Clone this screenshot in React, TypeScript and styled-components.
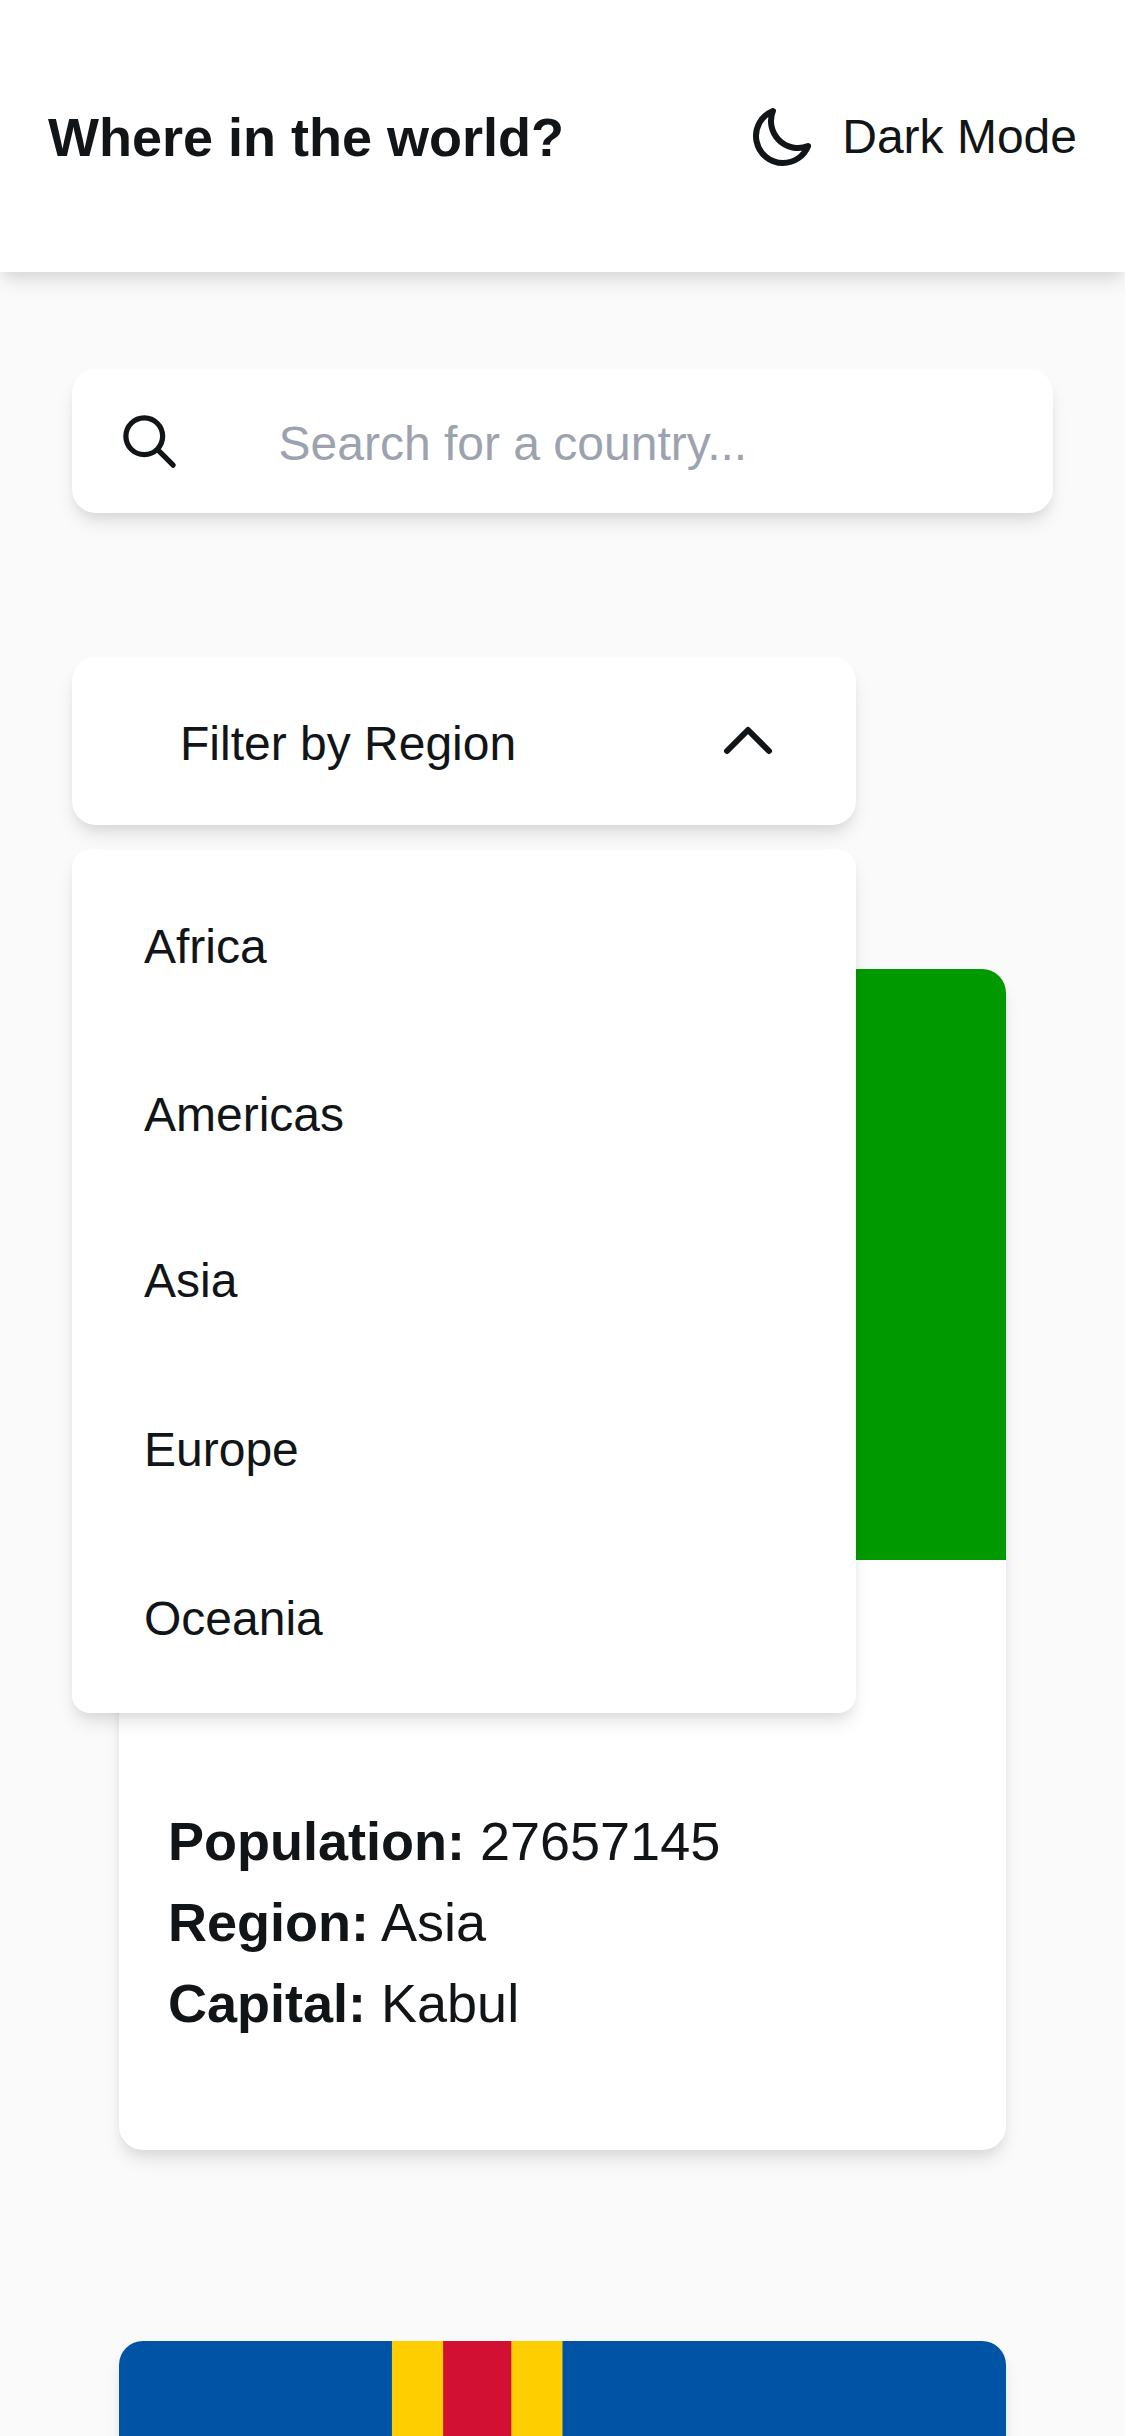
import React, { useState } from "react";
import styled, { createGlobalStyle } from "styled-components";

const ink = "#111517";
const shadow =
  "0 12px 18px -3px rgba(0, 0, 0, 0.1), 0 6px 12px -3px rgba(0, 0, 0, 0.06)";

const GlobalStyle = createGlobalStyle`
  *, *::before, *::after { box-sizing: border-box; }
  body {
    margin: 0;
    background: #fafafa;
    color: ${ink};
    font: 400 48px/72px "Liberation Sans", Arial, sans-serif;
  }
  h1, h2, p, ul { margin: 0; padding: 0; }
  ul { list-style: none; }
  button, input { font: inherit; color: inherit; border: 0; background: none; }
`;

const Page = styled.div`
  height: 2436px;
  overflow: hidden;
`;

const Header = styled.header`
  display: flex;
  align-items: center;
  justify-content: space-between;
  height: 272px;
  padding: 0 48px;
  background: #fff;
  box-shadow: ${shadow};
`;

const Title = styled.h1`
  padding-top: 2px;
  font-size: 54px;
  line-height: 84px;
  font-weight: 700;
`;

const ModeButton = styled.button`
  display: flex;
  align-items: center;
  gap: 23px;
  padding: 0;
`;

const Label = styled.span<{ $drop: number }>`
  padding-top: ${(p) => p.$drop}px;
`;

const Icon = styled.svg<{ $size: number }>`
  display: block;
  flex: none;
  width: ${(p) => p.$size}px;
  height: ${(p) => p.$size}px;
  fill: none;
  stroke: currentColor;
  stroke-width: 2;
  stroke-linecap: round;
  stroke-linejoin: round;
`;

const Main = styled.main`
  display: flex;
  flex-direction: column;
  gap: 144px;
  padding: 97px 72px 0;
`;

const SearchBox = styled.label`
  display: flex;
  align-items: center;
  gap: 97.5px;
  height: 143.7px;
  padding: 2px 46px 0;
  border-radius: 24px;
  background: #fff;
  box-shadow: ${shadow};
`;

const SearchInput = styled.input`
  flex: 1;
  min-width: 0;
  height: 72px;
  padding: 4px 0 0;
  outline: none;
  &::placeholder {
    color: #9ca3af;
    opacity: 1;
  }
`;

const Filter = styled.div`
  position: relative;
  z-index: 1;
  width: 784.3px;
`;

const FilterButton = styled.button`
  display: flex;
  align-items: center;
  justify-content: space-between;
  width: 100%;
  height: 168.3px;
  padding: 2px 72px 0 108px;
  border-radius: 24px;
  background: #fff;
  box-shadow: ${shadow};
`;

const Menu = styled.ul`
  position: absolute;
  top: calc(100% + 25px);
  left: 0;
  width: 100%;
  height: 862.6px;
  padding: 13px 0 0;
  border-radius: 18px;
  background: #fff;
  box-shadow: ${shadow};
`;

const MenuItem = styled.li<{ $height: number }>`
  height: ${(p) => p.$height}px;
  padding: 48px 72px;
`;

const Cards = styled.section`
  display: flex;
  flex-direction: column;
  gap: 191px;
  padding: 0 47px;
`;

const Card = styled.article`
  height: 1181px;
  overflow: hidden;
  border-radius: 24px;
  background: #fff;
  box-shadow: ${shadow};
`;

const Flag = styled.svg`
  display: block;
  width: 100%;
`;

const Details = styled.div`
  padding: 240.6px 48px 0 49px;
  font-size: 54px;
  line-height: 81px;
`;

const regions = [
  { name: "Africa", height: 168 },
  { name: "Americas", height: 166 },
  { name: "Asia", height: 169 },
  { name: "Europe", height: 169 },
  { name: "Oceania", height: 168 },
];

const AfghanistanFlag = () => (
  <Flag viewBox="0 0 900 600">
    <path d="M0 0h300v600H0z" fill="#000" />
    <path d="M300 0h300v600H300z" fill="#be0000" />
    <path d="M600 0h300v600H600z" fill="#090" />
  </Flag>
);

const AlandFlag = () => (
  <Flag viewBox="0 0 26 17">
    <path d="M0 0h26v17H0z" fill="#0053a5" />
    <path d="M8 0h5v17H8zM0 6h26v5H0z" fill="#ffce00" />
    <path d="M9.5 0h2v17h-2zM0 7.5h26v2H0z" fill="#d21034" />
  </Flag>
);

export default function App() {
  const [open, setOpen] = useState(true);
  return (
    <Page>
      <GlobalStyle />
      <Header>
        <Title>Where in the world?</Title>
        <ModeButton>
          <Icon $size={72} viewBox="0 0 24 24">
            <path d="M20.354 15.354A9 9 0 018.646 3.646 9.003 9.003 0 0012 21a9.003 9.003 0 008.354-5.646z" />
          </Icon>
          <Label $drop={2}>Dark Mode</Label>
        </ModeButton>
      </Header>
      <Main>
        <SearchBox>
          <Icon $size={63} viewBox="0 0 24 24">
            <path d="M21 21l-6-6m2-5a7 7 0 11-14 0 7 7 0 0114 0z" />
          </Icon>
          <SearchInput placeholder="Search for a country..." />
        </SearchBox>
        <Filter>
          <FilterButton onClick={() => setOpen(!open)}>
            <Label $drop={5}>Filter by Region</Label>
            <Icon $size={72} viewBox="0 0 24 24">
              <path d={open ? "M5 15l7-7 7 7" : "M19 9l-7 7-7-7"} />
            </Icon>
          </FilterButton>
          {open && (
            <Menu>
              {regions.map((region) => (
                <MenuItem key={region.name} $height={region.height}>
                  {region.name}
                </MenuItem>
              ))}
            </Menu>
          )}
        </Filter>
        <Cards>
          <Card>
            <AfghanistanFlag />
            <Details>
              <p><b>Population:</b> 27657145</p>
              <p><b>Region:</b> Asia</p>
              <p><b>Capital:</b> Kabul</p>
            </Details>
          </Card>
          <Card>
            <AlandFlag />
          </Card>
        </Cards>
      </Main>
    </Page>
  );
}
